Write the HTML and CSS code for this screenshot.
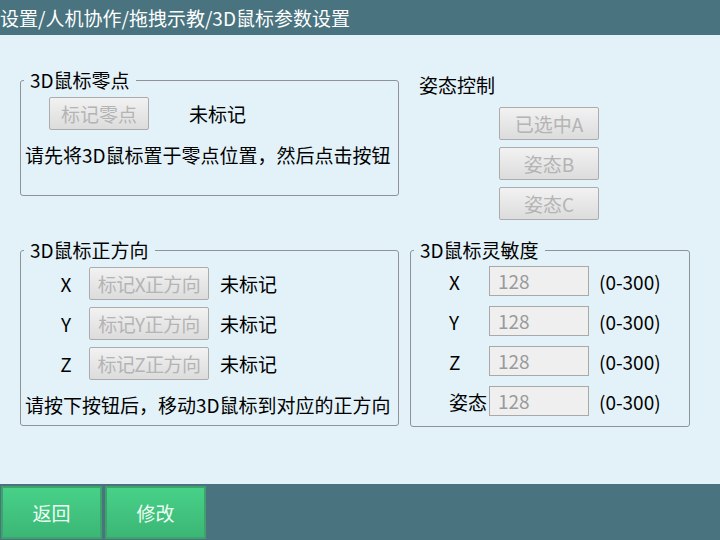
FILE: index.html
```html
<!DOCTYPE html>
<html lang="zh">
<head>
<meta charset="utf-8">
<link rel="stylesheet" href="styles.css">
</head>
<body>
<div class="app">
  <header class="topbar">设置/人机协作/拖拽示教/3D鼠标参数设置</header>
  <main class="main">
    <section class="col-left">
      <fieldset class="group group-zero">
        <legend>3D鼠标零点</legend>
        <div class="zero-row">
          <button class="btn btn-zero" disabled>标记零点</button>
          <span class="status status-zero">未标记</span>
        </div>
        <p class="hint hint-zero">请先将3D鼠标置于零点位置，然后点击按钮</p>
      </fieldset>
      <fieldset class="group group-dir">
        <legend>3D鼠标正方向</legend>
        <div class="dir-rows">
          <div class="dir-row"><span class="axis">X</span><button class="btn btn-dir" disabled>标记X正方向</button><span class="status">未标记</span></div>
          <div class="dir-row"><span class="axis">Y</span><button class="btn btn-dir" disabled>标记Y正方向</button><span class="status">未标记</span></div>
          <div class="dir-row"><span class="axis">Z</span><button class="btn btn-dir" disabled>标记Z正方向</button><span class="status">未标记</span></div>
        </div>
        <p class="hint hint-dir">请按下按钮后，移动3D鼠标到对应的正方向</p>
      </fieldset>
    </section>
    <section class="col-right">
      <div class="pose-title">姿态控制</div>
      <div class="pose-buttons">
        <button class="btn btn-pose" disabled>已选中A</button>
        <button class="btn btn-pose" disabled>姿态B</button>
        <button class="btn btn-pose" disabled>姿态C</button>
      </div>
      <fieldset class="group group-sens">
        <legend>3D鼠标灵敏度</legend>
        <div class="sens-rows">
          <div class="sens-row"><span class="sens-label">X</span><span class="field">128</span><span class="range">(0-300)</span></div>
          <div class="sens-row"><span class="sens-label">Y</span><span class="field">128</span><span class="range">(0-300)</span></div>
          <div class="sens-row"><span class="sens-label">Z</span><span class="field">128</span><span class="range">(0-300)</span></div>
          <div class="sens-row"><span class="sens-label">姿态</span><span class="field">128</span><span class="range">(0-300)</span></div>
        </div>
      </fieldset>
    </section>
  </main>
  <footer class="footbar">
    <button class="btn-green">返回</button>
    <button class="btn-green">修改</button>
  </footer>
</div>
</body>
</html>
```
FILE: styles.css
```css
* { box-sizing: border-box; }

html, body {
  margin: 0;
  padding: 0;
}

body {
  width: 720px;
  height: 540px;
  overflow: hidden;
  background: #e3f2f8;
  font-family: "Noto Sans CJK SC", "Noto Sans", sans-serif;
  font-size: 19px;
  color: #000;
}

.app {
  display: flex;
  flex-direction: column;
  width: 720px;
  height: 540px;
}

.topbar {
  height: 35px;
  flex: none;
  background: #48737f;
  color: #ffffff;
  line-height: 35px;
  padding-left: 0;
  white-space: nowrap;
}

.main {
  flex: 1;
  display: flex;
  flex-direction: row;
  padding-left: 20px;
}

.col-left {
  width: 379px;
  display: flex;
  flex-direction: column;
  padding-top: 35px;
}

.col-right {
  width: 280px;
  margin-left: 11px;
  display: flex;
  flex-direction: column;
}

/* Group boxes */
.group {
  margin: 0;
  padding: 0;
  border: 1px solid #8e9398;
  border-radius: 3px;
  min-width: 0;
}

.group legend {
  margin-left: 3px;
  padding: 0 6px;
  line-height: 20px;
  height: 20px;
  white-space: nowrap;
}

.group-zero {
  height: 126px;
  padding-top: 7px;
}

.group-dir {
  margin-top: 44px;
  height: 186px;
  padding-top: 7px;
}

/* Disabled grey buttons */
.btn {
  font-family: inherit;
  font-size: 19px;
  color: #b4b4b4;
  background: linear-gradient(#f2f2f2, #dcdcdc);
  border: 1px solid #acacac;
  border-radius: 2px;
  height: 33px;
  padding: 0;
  line-height: 31px;
  white-space: nowrap;
}

.zero-row {
  display: flex;
  align-items: center;
  padding-left: 28px;
}

.btn-zero {
  width: 100px;
}

.status {
  line-height: 24px;
  white-space: nowrap;
}

.status-zero {
  margin-left: 40px;
}

.hint {
  margin: 0;
  line-height: 24px;
  white-space: nowrap;
  padding-left: 4px;
}

.hint-zero {
  margin-top: 13px;
}

.dir-rows {
  display: flex;
  flex-direction: column;
  gap: 7px;
  padding-left: 28px;
}

.dir-row {
  display: flex;
  align-items: center;
}

.axis {
  width: 34px;
  text-align: center;
}

.btn-dir {
  width: 120px;
  margin-left: 6px;
  letter-spacing: -0.6px;
}

.dir-row .status {
  margin-left: 11px;
}

.hint-dir {
  margin-top: 13px;
}

/* Pose control */
.pose-title {
  margin-top: 38px;
  padding-left: 9px;
  line-height: 24px;
}

.pose-buttons {
  display: flex;
  flex-direction: column;
  gap: 7px;
  margin-top: 10px;
  padding-left: 89px;
}

.btn-pose {
  width: 100px;
}

/* Sensitivity */
.group-sens {
  margin-top: 20px;
  height: 187px;
  padding-top: 6px;
}

.sens-rows {
  display: flex;
  flex-direction: column;
  gap: 10px;
  padding-left: 38px;
}

.sens-row {
  display: flex;
  align-items: center;
  height: 30px;
}

.sens-label {
  width: 40px;
  white-space: nowrap;
}

.field {
  width: 100px;
  height: 30px;
  background: #efefef;
  border: 1px solid #a9a9a9;
  color: #9a9a9a;
  padding-left: 8px;
  line-height: 28px;
}

.range {
  margin-left: 10px;
  white-space: nowrap;
}

/* Footer */
.footbar {
  height: 56px;
  flex: none;
  background: #48737f;
  display: flex;
  gap: 3px;
  padding: 2px 0 1px 1px;
}

.btn-green {
  width: 101px;
  height: 53px;
  font-family: inherit;
  font-size: 19px;
  color: #eefff4;
  background: linear-gradient(#47d188, #3cb676);
  border: 2px solid #3da36b;
  border-radius: 1px;
  padding: 0;
}
```
